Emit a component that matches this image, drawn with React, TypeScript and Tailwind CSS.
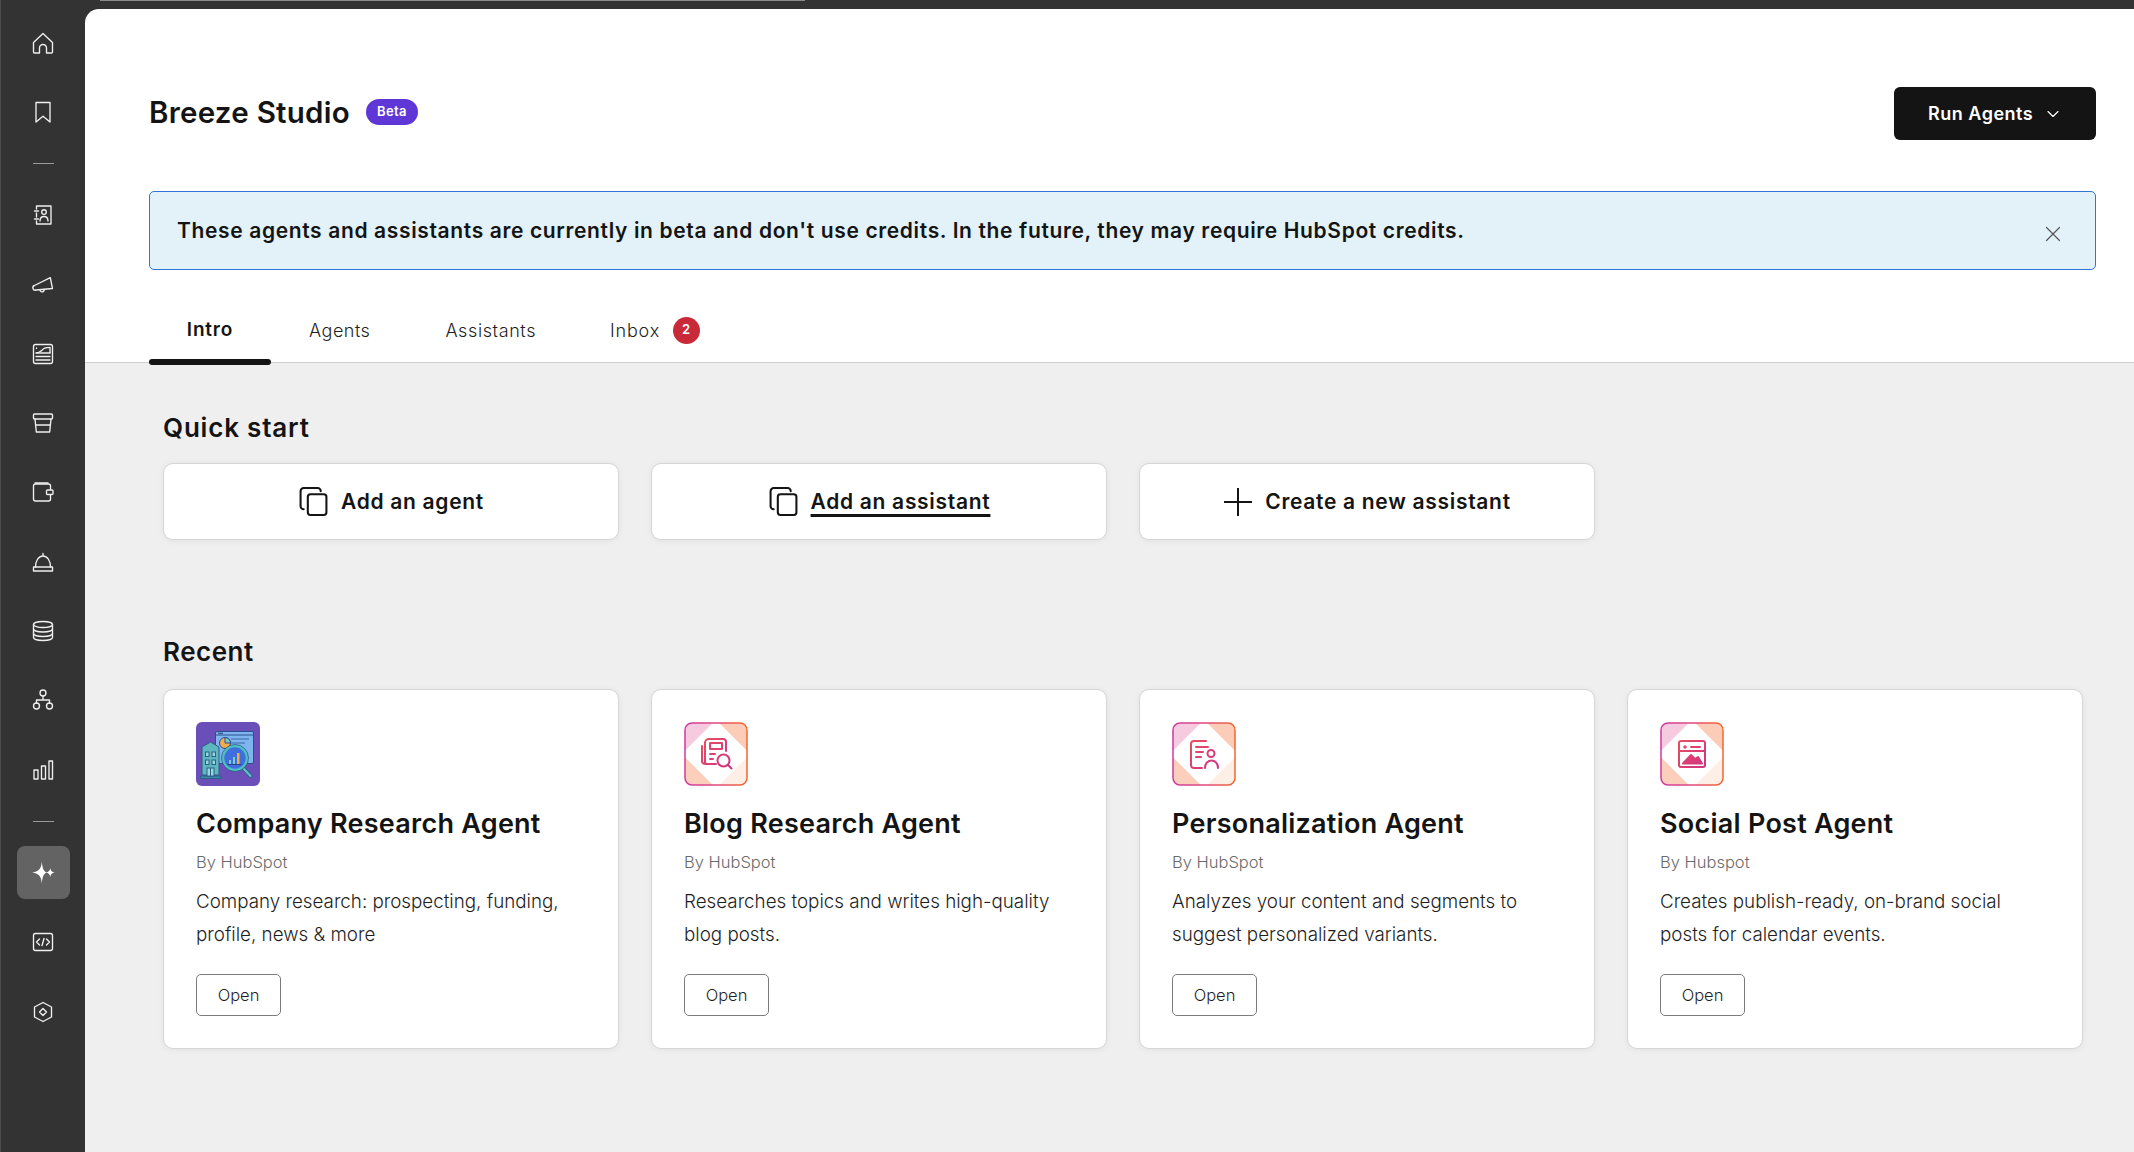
import { useId } from 'react';
import type { ReactNode } from 'react';
import { ChevronDown, X } from 'lucide-react';

function NavSvg({ children }: { children: ReactNode }) {
  return (
    <svg width="24" height="24" viewBox="0 0 24 24" fill="none" stroke="#f0f0f0" strokeWidth="1.35" strokeLinejoin="round" strokeLinecap="round">
      {children}
    </svg>
  );
}

const navIcons: Record<string, ReactNode> = {
  home: <path d="M2.500 11.500 12 2.500l9.500 9v9.500a1 1 0 0 1-1 1h-5v-5a3.500 3.500 0 0 0-7 0v5h-5a1 1 0 0 1-1-1z" />,
  bookmark: <path d="M5 2.500h14V22l-7-5.800L5 22z" />,
  contacts: (
    <>
      <path d="M5.500 6V3h14.500v18H5.500v-3M5.500 10v4" />
      <path d="M3.500 8h4M3.500 16h4" />
      <circle cx="13" cy="9" r="2.300" />
      <path d="M9 18c0-6 8-6 8 0" />
    </>
  ),
  megaphone: (
    <>
      <path d="M3.500 12.500 19.300 4.600l2.200 10.900L5 17a2.300 2.300 0 0 1-1.500-4.500z" />
      <path d="M9 16.700c0 3 4 3 4.300-.3" />
    </>
  ),
  report: (
    <>
      <rect x="2.500" y="2.500" width="19" height="19" rx="2" />
      <path d="M5.500 10.800c3 0 3.300-1.500 5.500-2.500 1-2 4.500-3 8-3v5.500" />
      <path d="M5 11h14M5 14.500h14M5 18h14" />
      <path d="M5.500 6v.4" />
    </>
  ),
  store: (
    <>
      <rect x="2.500" y="3" width="19" height="5" rx="1" />
      <path d="M4 8l1.300 13h13.400L20 8M4.700 14h14.600" />
    </>
  ),
  wallet: (
    <>
      <path d="M19.500 9.500V6a2 2 0 0 0-2-2H4.500a2 2 0 0 0-2 2v13a2 2 0 0 0 2 2h13a2 2 0 0 0 2-2v-3.500" />
      <path d="M4 3h13" />
      <rect x="15.500" y="10" width="6.500" height="4.500" rx="1" />
    </>
  ),
  bell: (
    <>
      <path d="M12 5.500V3.500M4.500 17c0-6 3-11 7.500-11s7.500 5 7.500 11" />
      <path d="M2.500 17h19v4h-19z" />
    </>
  ),
  database: (
    <>
      <ellipse cx="12" cy="5.500" rx="9.500" ry="3" />
      <path d="M2.500 5.500v13c0 1.700 4.300 3 9.500 3s9.500-1.300 9.500-3v-13" />
      <path d="M2.500 10c0 1.700 4.300 3 9.500 3s9.500-1.300 9.500-3M2.500 14.500c0 1.700 4.300 3 9.500 3s9.500-1.300 9.500-3" />
    </>
  ),
  tree: (
    <>
      <circle cx="12" cy="5" r="3" />
      <circle cx="5.500" cy="18" r="3" />
      <circle cx="18.500" cy="18" r="3" />
      <path d="M12 8v4M5.500 15v-3h13v3" />
    </>
  ),
  bars: (
    <>
      <rect x="3" y="12" width="4" height="9" />
      <rect x="10.500" y="8" width="4" height="13" />
      <rect x="18" y="3" width="3.500" height="18" />
    </>
  ),
  code: (
    <>
      <rect x="2.500" y="3.500" width="19" height="17" rx="2" />
      <path d="M8.500 9 5.500 12l3 3M15.500 9l3 3-3 3M13 8.500l-2 7" />
    </>
  ),
  hexagon: (
    <>
      <path d="M12 2.500 20.500 7v10L12 21.500 3.500 17V7z" />
      <path d="M12 8.500 15.500 12 12 15.500 8.500 12z" />
    </>
  ),
};

function NavRow({ name }: { name: string }) {
  return (
    <div className="flex h-[69.3px] items-center justify-center">
      <NavSvg>{navIcons[name]}</NavSvg>
    </div>
  );
}

function NavDivider() {
  return (
    <div className="flex h-[34px] items-center justify-center">
      <div className="h-px w-[21px] bg-[#9a9a9a]" />
    </div>
  );
}

function Sidebar() {
  return (
    <aside className="w-[85px] shrink-0 border-l border-[#4d4d4d] pt-[8px]">
      <NavRow name="home" />
      <NavRow name="bookmark" />
      <NavDivider />
      {['contacts', 'megaphone', 'report', 'store', 'wallet', 'bell', 'database', 'tree', 'bars'].map((n) => (
        <NavRow key={n} name={n} />
      ))}
      <NavDivider />
      <div className="flex h-[69.3px] items-center justify-center">
        <div className="flex h-[53px] w-[53px] items-center justify-center rounded-lg bg-[#636363]">
          <svg width="27" height="27" viewBox="0 0 24 24" fill="#fff">
            <path d="M10.500 2c.4 6 1.500 8.500 4 10-2.500 1.500-3.600 4-4 10-.4-6-2-9-8.500-10 6.500-1 8.100-4 8.500-10z" />
            <path d="M18 8c.3 2.500 1.300 3.500 4 4-2.700.5-3.700 1.500-4 4-.3-2.500-1.300-3.500-4-4 2.700-.5 3.700-1.500 4-4z" />
          </svg>
        </div>
      </div>
      <NavRow name="code" />
      <NavRow name="hexagon" />
    </aside>
  );
}

function CopyIcon() {
  return (
    <svg width="31" height="31" viewBox="0 0 30 30" fill="none" stroke="#141414" strokeWidth="2" strokeLinejoin="round" strokeLinecap="round">
      <rect x="9.500" y="8" width="18" height="20" rx="2.500" />
      <path d="M5.500 22.500a3 3 0 0 1-3-3V5a3 3 0 0 1 3-3H19a3 3 0 0 1 3 3" />
    </svg>
  );
}

function PlusIcon() {
  return (
    <svg width="30" height="30" viewBox="0 0 30 30" fill="none" stroke="#141414" strokeWidth="2">
      <path d="M15 1v28M1 15h28" />
    </svg>
  );
}

function CompanyIcon() {
  return (
    <svg width="64" height="64" viewBox="0 0 64 64">
      <rect width="64" height="64" rx="6" fill="#6b4fb8" />
      <rect x="19.500" y="9.500" width="38" height="32" rx="1.500" fill="#7fb5ee" stroke="#2b4f8f" />
      <path d="M19.500 13h38" stroke="#2b4f8f" />
      <path d="M22 11.200h5" stroke="#1f3a6e" />
      <path d="M35 17h18M35 21h14M35 25h10" stroke="#3d68a8" />
      <circle cx="29" cy="21" r="5.500" fill="#f4ab4e" stroke="#2b4f8f" />
      <path d="M29 21v-5.500a5.500 5.500 0 0 1 5.500 5.500z" fill="#7ec9cf" stroke="#2b4f8f" />
      <path d="M6 25l8.500-5 8.500 5v28H6z" fill="#5fb6c0" stroke="#2a5f86" />
      <path d="M4.500 54h20.500v2.500H4.500z" fill="#3f88a8" stroke="#2a5f86" />
      <g fill="#9bd7de" stroke="#2a5f86">
        <rect x="9.500" y="30" width="3.500" height="4.500" />
        <rect x="16" y="30" width="3.500" height="4.500" />
        <rect x="9.500" y="38" width="3.500" height="4.500" />
        <rect x="16" y="38" width="3.500" height="4.500" />
        <rect x="11" y="46" width="7" height="8" />
      </g>
      <path d="M14.500 46v8" stroke="#2a5f86" />
      <path d="M46 45l8.500 9" stroke="#2a5f86" strokeWidth="4" strokeLinecap="round" />
      <path d="M46 45l8.500 9" stroke="#5fc2c6" strokeWidth="2.200" strokeLinecap="round" />
      <circle cx="39" cy="36" r="12" fill="#3f6fdc" stroke="#4fc0c2" strokeWidth="2.500" />
      <circle cx="39" cy="36" r="13.500" fill="none" stroke="#2a5f86" strokeWidth=".8" />
      <rect x="33" y="38" width="2" height="4" fill="#7ec9cf" />
      <rect x="37" y="35" width="2" height="7" fill="#7ec9cf" />
      <rect x="41" y="31" width="2.500" height="11" fill="#f4ab4e" />
      <path d="M31.500 42.500h14" stroke="#1f3a6e" strokeWidth=".8" />
    </svg>
  );
}

function PinkIcon({ kind }: { kind: 'blog' | 'person' | 'social' }) {
  const id = useId();
  const stroke = `url(#${id}s)`;
  return (
    <svg width="64" height="64" viewBox="0 0 64 64" fill="none">
      <defs>
        <linearGradient id={`${id}b`} x1="0" y1="0" x2="1" y2="0">
          <stop offset="0" stopColor="#cd3b9f" />
          <stop offset=".5" stopColor="#e2487f" />
          <stop offset="1" stopColor="#f3682c" />
        </linearGradient>
        <linearGradient id={`${id}s`} gradientUnits="userSpaceOnUse" x1="16" y1="16" x2="48" y2="48">
          <stop offset="0" stopColor="#e8525f" />
          <stop offset="1" stopColor="#cf2f85" />
        </linearGradient>
        <clipPath id={`${id}c`}>
          <rect x="1" y="1" width="62" height="62" rx="7" />
        </clipPath>
      </defs>
      <g clipPath={`url(#${id}c)`}>
        <rect width="32" height="32" fill="#f7cbdf" />
        <rect x="32" width="32" height="32" fill="#fbccb8" />
        <rect y="32" width="32" height="32" fill="#fbcfbc" />
        <rect x="32" y="32" width="32" height="32" fill="#fdeee6" />
        <path d="M32 2 62 32 32 62 2 32z" fill="#fff" stroke="#fff" strokeWidth="6" strokeLinejoin="round" />
      </g>
      <rect x="1" y="1" width="62" height="62" rx="7" stroke={`url(#${id}b)`} strokeWidth="1.500" />
      <g stroke={stroke} strokeWidth="2" strokeLinecap="round" strokeLinejoin="round">
        {kind === 'blog' && (
          <>
            <path d="M21 21v19a2 2 0 0 0 2 2h9" />
            <path d="M18 24v16a4 4 0 0 0 4 2" />
            <path d="M21 21a4 4 0 0 1 4-4h14a3 3 0 0 1 3 3v9" />
            <rect x="26" y="21" width="12" height="6" />
            <path d="M26 32h5M26 37h3" />
            <circle cx="39.500" cy="38.500" r="6" />
            <path d="M44 43l3.500 3.500" />
          </>
        )}
        {kind === 'person' && (
          <>
            <path d="M34 19H22a3 3 0 0 0-3 3v21a3 3 0 0 0 3 3h8" />
            <path d="M24 25h12M24 30h7M24 35h5" />
            <circle cx="39" cy="31.500" r="3.500" />
            <path d="M33 46c0-10 13-10 13 0" />
          </>
        )}
        {kind === 'social' && (
          <>
            <rect x="19" y="19" width="26" height="26" rx="2" />
            <path d="M31 25h9M19.500 29h25" />
            <circle cx="25" cy="25" r=".8" fill={stroke} />
            <path d="M23 41.500 31 33l4 4 3-2 4 6.500z" fill={stroke} />
          </>
        )}
      </g>
    </svg>
  );
}

const agents = [
  { title: 'Company Research Agent', by: 'By HubSpot', lines: ['Company research: prospecting, funding,', 'profile, news & more'], icon: <CompanyIcon /> },
  { title: 'Blog Research Agent', by: 'By HubSpot', lines: ['Researches topics and writes high-quality', 'blog posts.'], icon: <PinkIcon kind="blog" /> },
  { title: 'Personalization Agent', by: 'By HubSpot', lines: ['Analyzes your content and segments to', 'suggest personalized variants.'], icon: <PinkIcon kind="person" /> },
  { title: 'Social Post Agent', by: 'By Hubspot', lines: ['Creates publish-ready, on-brand social', 'posts for calendar events.'], icon: <PinkIcon kind="social" /> },
];

function AgentCard({ agent }: { agent: (typeof agents)[number] }) {
  return (
    <div className="h-[360px] rounded-[10px] border border-[#d6d6d6] bg-white px-[32px] pt-[32px] shadow-[0_1px_6px_rgba(0,0,0,0.06)]">
      {agent.icon}
      <h3 className="mt-[21px] text-[27px] leading-[34px] font-semibold tracking-[0.25px] text-[#141414]">{agent.title}</h3>
      <p className="mt-[9px] text-[16.5px] leading-[24px] font-light text-[#6a6a6a]">{agent.by}</p>
      <p className="mt-[12px] text-[18.8px] leading-[32.5px] font-light text-[#1f1f1f]">
        {agent.lines[0]}
        <br />
        {agent.lines[1]}
      </p>
      <button className="mt-[23px] flex h-[42px] w-[85px] items-center justify-center rounded-[5px] border border-[#7c7c7c] bg-white text-[16.5px] font-light text-[#1f1f1f]">
        Open
      </button>
    </div>
  );
}

function QuickCard({ icon, label, underline }: { icon: ReactNode; label: string; underline?: boolean }) {
  return (
    <div className="flex h-[77px] items-center justify-center gap-[12px] rounded-[10px] border border-[#d6d6d6] bg-white text-[21px] font-semibold tracking-[0.7px] text-[#141414] shadow-[0_1px_6px_rgba(0,0,0,0.06)]">
      {icon}
      <span className={underline ? 'leading-[27px] underline decoration-[3px] underline-offset-[5px]' : 'leading-[27px]'}>{label}</span>
    </div>
  );
}

export default function App() {
  return (
    <div className="flex h-[1152px] overflow-hidden bg-[#333333] font-['Inter',sans-serif]">
      <Sidebar />
      <div className="flex min-w-0 flex-1 flex-col">
        <div className="h-[9px] shrink-0">
          <div className="ml-[15px] h-px w-[705px] bg-[#8c8c8c]" />
        </div>
        <main className="flex flex-1 flex-col overflow-hidden rounded-tl-[14px] bg-white">
          <div className="pr-[38px] pl-[64px]">
            <div className="flex items-start justify-between pt-[78px]">
              <div className="flex h-[53px] items-center gap-[16px] pb-[3px]">
                <h1 className="text-[29.5px] font-semibold tracking-[0.25px] text-[#141414]">Breeze Studio</h1>
                <span className="flex h-[26px] w-[52px] items-center justify-center rounded-[13px] bg-[#5f37d6] text-[13px] font-semibold tracking-[0.3px] text-white">
                  Beta
                </span>
              </div>
              <button className="flex h-[53px] w-[202px] items-center gap-[10px] rounded-[6px] bg-[#141414] pl-[34px] text-[18px] font-semibold tracking-[0.5px] text-white">
                Run Agents
                <ChevronDown size={20} strokeWidth={1.4} />
              </button>
            </div>
            <div className="mt-[51px] flex h-[79px] items-center justify-between rounded-[5px] border border-[#2f74d8] bg-[#e3f2f9] pr-[29px] pl-[27px]">
              <p className="pt-[1px] text-[21px] font-semibold tracking-[0.64px] text-[#141414]">
                These agents and assistants are currently in beta and don't use credits. In the future, they may require HubSpot credits.
              </p>
              <X size={26} strokeWidth={1.1} className="mt-[6px] text-[#555555]" />
            </div>
          </div>
          <div className="flex h-[93px] shrink-0 items-end border-b border-[#cfcfcf] pl-[64px]">
            <div className="relative flex h-[61px] w-[122px] items-center justify-center pb-[2px] text-[19px] font-semibold tracking-[0.8px] text-[#141414]">
              Intro
              <div className="absolute right-0 -bottom-[3px] left-0 h-[6px] rounded-[3px] bg-[#141414]" />
            </div>
            <div className="flex h-[61px] items-center px-[38px] pb-[3px] text-[18px] font-light tracking-[0.5px] text-[#1f1f1f]">Agents</div>
            <div className="flex h-[61px] items-center pr-[36px] pl-[37px] pb-[3px] text-[18px] font-light tracking-[0.6px] text-[#1f1f1f]">Assistants</div>
            <div className="flex h-[61px] items-center gap-[13px] pl-[38px] pb-[3px] text-[18px] font-light tracking-[0.8px] text-[#1f1f1f]">
              Inbox
              <span className="flex h-[27px] w-[27px] items-center justify-center rounded-full bg-[#c92a3a] text-[13px] font-semibold text-white">2</span>
            </div>
          </div>
          <div className="flex-1 bg-[#efefef] pt-[49px] pr-[51px] pl-[78px]">
            <h2 className="text-[26px] leading-[32px] font-semibold tracking-[0.8px] text-[#141414]">Quick start</h2>
            <div className="mt-[19px] grid grid-cols-4 gap-[32px]">
              <QuickCard icon={<CopyIcon />} label="Add an agent" />
              <QuickCard icon={<CopyIcon />} label="Add an assistant" underline />
              <QuickCard icon={<PlusIcon />} label="Create a new assistant" />
            </div>
            <h2 className="mt-[96px] text-[26px] leading-[32px] font-semibold tracking-[0.5px] text-[#141414]">Recent</h2>
            <div className="mt-[21px] grid grid-cols-4 gap-[32px]">
              {agents.map((a) => (
                <AgentCard key={a.title} agent={a} />
              ))}
            </div>
          </div>
        </main>
      </div>
    </div>
  );
}
